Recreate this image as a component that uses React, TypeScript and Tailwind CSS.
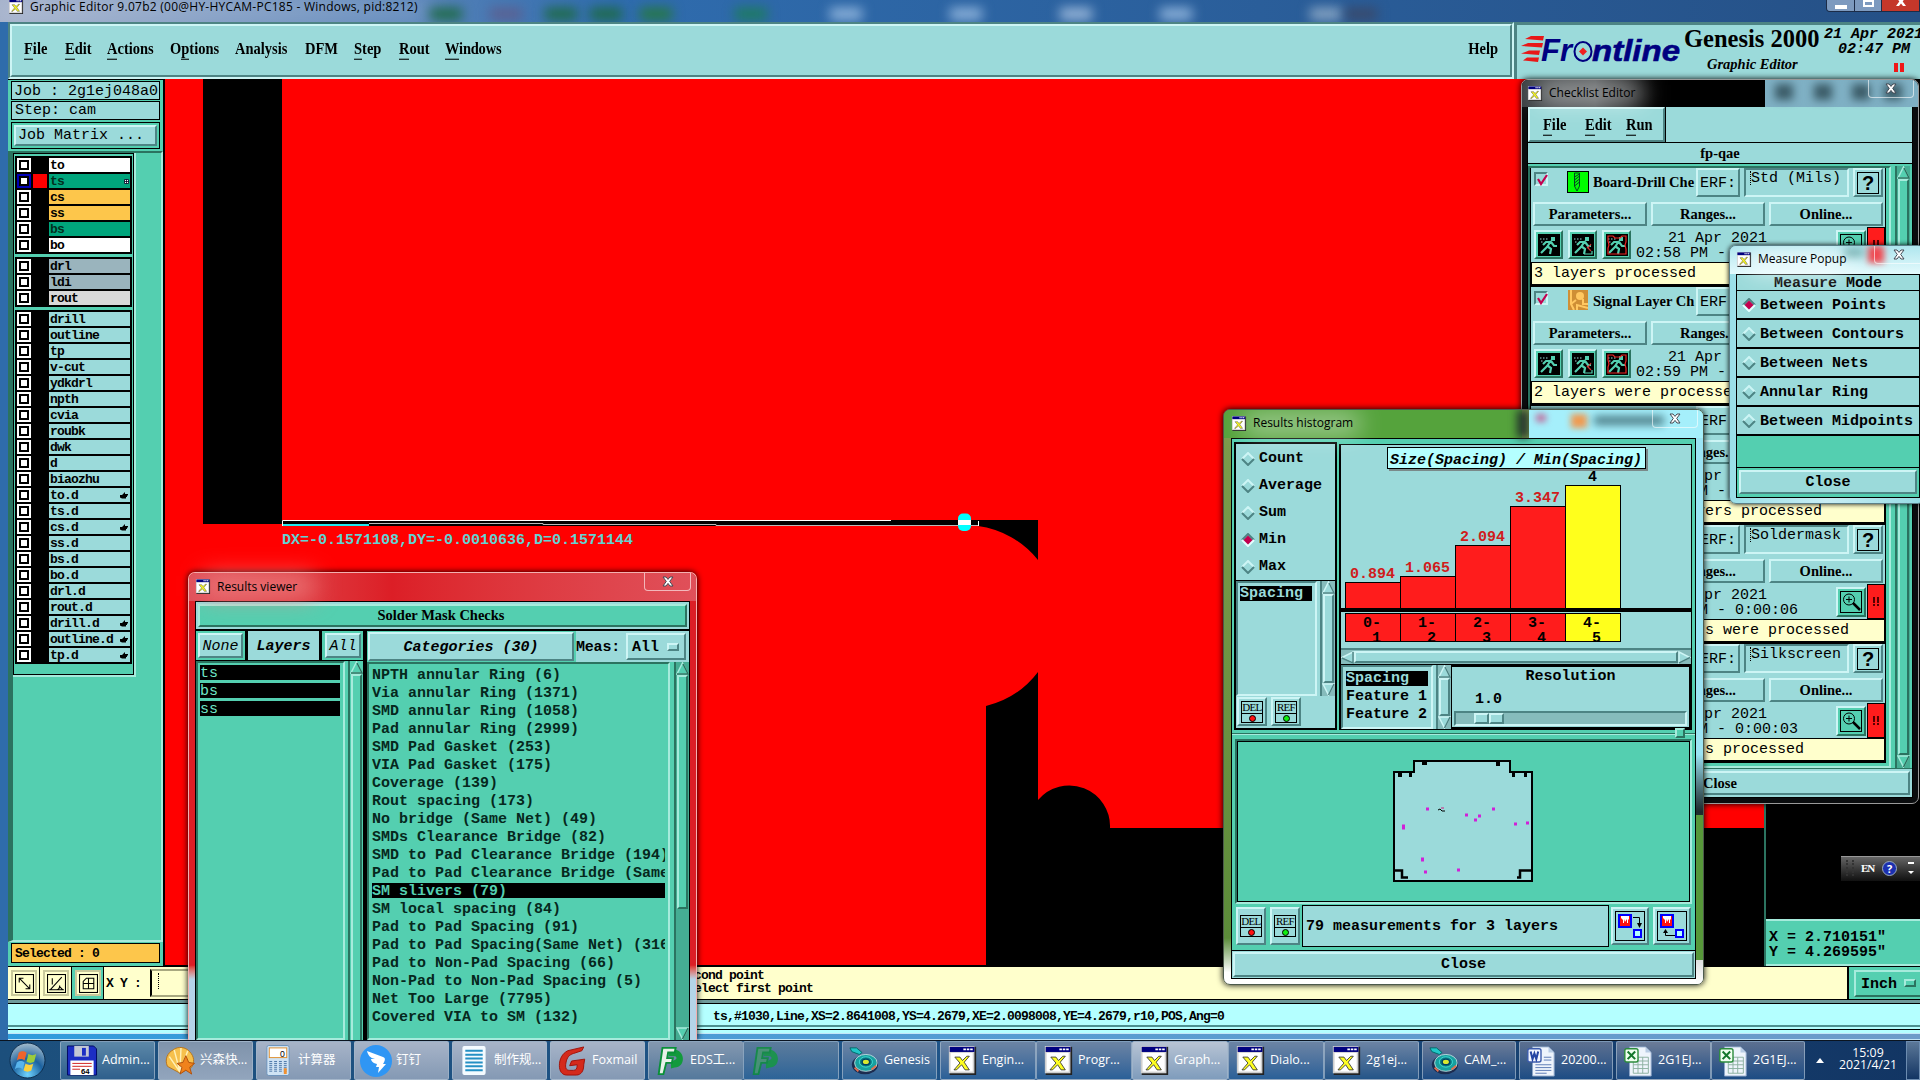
import type { ReactNode } from 'react'
import clsx from 'clsx'

const RAISED = 'bg-[#9bdada] border-2 border-t-[#cdf5f5] border-l-[#cdf5f5] border-b-[#4d8484] border-r-[#4d8484]'
const SUNKEN = 'bg-[#9bdada] border-2 border-t-[#4d8484] border-l-[#4d8484] border-b-[#cdf5f5] border-r-[#cdf5f5]'
const GREEN_UP = 'bg-[#54cfb0] border-2 border-t-[#a6ebdc] border-l-[#a6ebdc] border-b-[#2b7360] border-r-[#2b7360]'
const GREEN_DOWN = 'bg-[#54cfb0] border-2 border-t-[#2b7360] border-l-[#2b7360] border-b-[#a6ebdc] border-r-[#a6ebdc]'
const MONO = "font-['Liberation_Mono',monospace] text-[15px] leading-none whitespace-pre"
// same face, nudged down a pixel when centred in a fixed-height box
const MONO_LOW = "font-['Liberation_Mono',monospace] text-[15px] leading-none whitespace-pre pt-[2px]"
const SMALL = "font-['Liberation_Mono',monospace] text-[13px] tracking-[-0.8px] font-bold leading-none whitespace-pre"
const SERIF = "font-['Liberation_Serif',serif] font-bold text-[14.5px] leading-none whitespace-pre"
const UI = "font-['Open_Sans','Noto_Sans_CJK_SC',sans-serif] leading-none whitespace-pre"

interface Layer {
  name: string
  color?: string
  hand?: boolean
}

const BOARD_LAYERS: Layer[] = [
  { name: 'to', color: 'bg-white' },
  { name: 'ts', color: 'bg-[#00a57c]' },
  { name: 'cs', color: 'bg-[#fdc64b]' },
  { name: 'ss', color: 'bg-[#fdc64b]' },
  { name: 'bs', color: 'bg-[#00a57c]' },
  { name: 'bo', color: 'bg-white' },
]

const DRILL_LAYERS: Layer[] = [
  { name: 'drl', color: 'bg-[#9ab4bd]' },
  { name: 'ldi', color: 'bg-[#9ab4bd]' },
  { name: 'rout', color: 'bg-[#d9d9d9]' },
]

const MISC_LAYERS: Layer[] = [
  ...['drill', 'outline', 'tp', 'v-cut', 'ydkdrl', 'npth', 'cvia', 'roubk', 'dwk', 'd', 'biaozhu'].map(name => ({ name })),
  { name: 'to.d', hand: true },
  { name: 'ts.d' },
  { name: 'cs.d', hand: true },
  { name: 'ss.d' },
  { name: 'bs.d' },
  { name: 'bo.d' },
  { name: 'drl.d' },
  { name: 'rout.d' },
  { name: 'drill.d', hand: true },
  { name: 'outline.d', hand: true },
  { name: 'tp.d', hand: true },
]

const CATEGORIES = [
  'NPTH annular Ring (6)',
  'Via annular Ring (1371)',
  'SMD annular Ring (1058)',
  'Pad annular Ring (2999)',
  'SMD Pad Gasket (253)',
  'VIA Pad Gasket (175)',
  'Coverage (139)',
  'Rout spacing (173)',
  'No bridge (Same Net) (49)',
  'SMDs Clearance Bridge (82)',
  'SMD to Pad Clearance Bridge (194)',
  'Pad to Pad Clearance Bridge (Same',
  'SM slivers (79)',
  'SM local spacing (84)',
  'Pad to Pad Spacing (91)',
  'Pad to Pad Spacing(Same Net) (316',
  'Pad to Non-Pad Spacing (66)',
  'Non-Pad to Non-Pad Spacing (5)',
  'Net Too Large (7795)',
  'Covered VIA to SM (132)',
]

const BARS = [
  { value: '0.894', h: 26, from: '0-', to: '1' },
  { value: '1.065', h: 32, from: '1-', to: '2' },
  { value: '2.094', h: 63, from: '2-', to: '3' },
  { value: '3.347', h: 102, from: '3-', to: '4' },
  { value: '4', h: 123, from: '4-', to: '5', max: true },
]

const CHECKS = [
  { title: 'Board-Drill Che', erf: 'Std (Mils)', time: '02:58 PM - 0:00:03', msg: '3 layers processed', icon: 'drill' },
  { title: 'Signal Layer Ch', erf: 'Outer', time: '02:59 PM - 0:00:12', msg: '2 layers were processed', icon: 'signal' },
  { title: 'Power/Ground C', erf: 'Inner', time: '02:59 PM - 0:00:02', msg: '12 power/ground layers processed', icon: 'power' },
  { title: 'Solder Mask Ch', erf: 'Soldermask', time: '03:00 PM - 0:00:06', msg: '3 solder mask layers were processed', icon: 'signal' },
  { title: 'Silk Screen Ch', erf: 'Silkscreen', time: '03:01 PM - 0:00:03', msg: '2 silk screen layers processed', icon: 'power' },
]

/* ---------- icons ---------- */

function XIcon({ className }: { className?: string }) {
  return (
    <svg viewBox="0 0 32 34" className={clsx('shrink-0', className)}>
      <rect x="1" y="1" width="31" height="33" fill="#222" />
      <rect width="30" height="32" fill="#cfcfcf" />
      <rect x="2" y="8" width="26" height="22" fill="#fff" />
      <rect x="1" y="1" width="29" height="6" fill="#000080" />
      <path d="M17 3h3v2h-3zM21 3h3v2h-3zM25 3h3v2h-3z" fill="#fff" />
      <path d="M7 13h6l3 4 5-5h3l-6 7 6 9h-5l-4-6-6 6H6l7-8z" fill="#ffff20" stroke="#333" strokeWidth="1" />
    </svg>
  )
}

function Arrow({ dir, green }: { dir: 'up' | 'down' | 'left' | 'right'; green?: boolean }) {
  const pts = { up: '6.5,1 12,12 1,12', down: '1,1 12,1 6.5,12', left: '1,6.5 12,1 12,12', right: '1,1 12,6.5 1,12' }[dir]
  return (
    <svg viewBox="0 0 13 13" className="w-[13px] h-[13px] shrink-0">
      <polygon points={pts} fill={green ? '#54cfb0' : '#9bdada'} stroke={green ? '#a6ebdc' : '#cdf5f5'} strokeWidth="1.5" />
      <path d={dir === 'up' ? 'M1 12H12L7 2' : dir === 'down' ? 'M12 1L6.5 12' : dir === 'left' ? 'M12 1V12L1 7' : 'M12 6.5L1 12'} fill="none" stroke={green ? '#2b7360' : '#4d8484'} strokeWidth="1.5" />
    </svg>
  )
}

function Radio({ on }: { on?: boolean }) {
  return (
    <svg viewBox="0 0 14 14" className="w-[14px] h-[14px] shrink-0">
      <path d="M1 7L7 1L13 7" fill="none" stroke={on ? '#4d8484' : '#cdf5f5'} strokeWidth="2" />
      <path d="M1 7L7 13L13 7" fill="none" stroke={on ? '#e4ffff' : '#4d8484'} strokeWidth="2" />
      {on && <path d="M7 2.5L11.5 7L7 11.5L2.5 7Z" fill="#c4004f" />}
    </svg>
  )
}

function Hand() {
  return (
    <svg viewBox="0 0 8 8" className="w-2 h-2 mr-0.5">
      <path d="M0 4h2L5 1v2h3v1.500H7V6H6v1.500H2L0 6.500z" fill="#000" />
    </svg>
  )
}

function Runner({ kind }: { kind: number }) {
  return (
    <div className="w-[29px] h-[29px] bg-[#54cfb0] border-2 border-t-[#cdf5f5] border-l-[#cdf5f5] border-b-[#2b7360] border-r-[#2b7360] flex items-center justify-center">
      <svg viewBox="0 0 22 22" className="w-[22px] h-[22px] bg-black">
        <path d="M13 3h4v4h-4z" fill="#54cfb0" />
        <path d="M13 7l-4 6M12 8L8 8l-3 3M13 8l3 4h3M9 12l4 3-1 5M9 13l-3 3-3 3" fill="none" stroke="#54cfb0" strokeWidth="2.200" />
        <path d="M2 5h1.500M5 5h1.500M8 5h1.500M3 8h1.500" stroke="#9bdada" strokeWidth="1.2" />
        {kind === 1 && <path d="M19 10l-3 4M15 13l4 4" stroke="#c33" strokeWidth="1.2" fill="none" />}
        {kind === 1 && <path d="M12 20h8v-3" stroke="#54cfb0" strokeWidth="1.2" fill="none" />}
        {kind === 2 && <path d="M2 2h5l2 2h5l2-2h4v6l-1 3 1 4v5H2v-6l1-3-1-4z" stroke="#e22" strokeWidth="1.2" fill="none" />}
      </svg>
    </div>
  )
}

function CheckIcon({ kind }: { kind: string }) {
  if (kind === 'drill')
    return (
      <svg viewBox="0 0 22 22" className="w-[22px] h-[22px] shrink-0">
        <rect x=".5" y=".5" width="21" height="21" fill="#0f0" stroke="#000" />
        <path d="M7.500 2h5v13l-2.500 5-2.500-5zM7.500 6l5-3M7.500 9l5-4M7.500 12l5-4M7.500 15l5-4" fill="none" stroke="#042" strokeWidth="1" />
      </svg>
    )
  if (kind === 'signal')
    return (
      <svg viewBox="0 0 20 20" className="w-[20px] h-[20px] mx-px shrink-0">
        <rect width="20" height="20" fill="#cf8f35" />
        <circle cx="12" cy="6" r="4" fill="#ffc861" />
        <path d="M3 0v14l3 6M8 10l-5 4M15 9v5h5M9 20v-5l11 3" stroke="#ffc861" strokeWidth="2" fill="none" />
      </svg>
    )
  return (
    <svg viewBox="0 0 20 20" className="w-[20px] h-[20px] mx-px shrink-0">
      <circle cx="10" cy="10" r="9" fill="#f09040" />
      <circle cx="10" cy="10" r="4" fill="none" stroke="#fde" strokeWidth="2" />
    </svg>
  )
}

function DotButton({ label, dot, tall }: { label: string; dot: string; tall?: boolean }) {
  return (
    <div className={clsx(RAISED, 'w-[30px] flex items-center justify-center shrink-0', tall ? 'h-[38px]' : 'h-[29px]')}>
      <div className="w-[22px] h-[22px] border border-black flex flex-col items-center shrink-0">
        <span className="font-['Liberation_Serif',serif] text-[11px] leading-[11px] tracking-[-0.7px] border-b border-black text-black w-full flex justify-center">{label}</span>
        <span className={clsx('w-[7px] h-[7px] rounded-full border border-black mt-px', dot)} />
      </div>
    </div>
  )
}

function SwapButton({ back }: { back?: boolean }) {
  return (
    <div className={clsx(RAISED, 'w-[38px] h-[38px] flex items-center justify-center shrink-0')}>
      <svg viewBox="0 0 30 30" className="w-[30px] h-[30px]">
        <rect x=".5" y=".5" width="29" height="29" fill="none" stroke="#000" />
        <rect x="4" y="4" width="12" height="12" fill="#f11" stroke="#00f" strokeWidth="2" />
        <path d="M6 5h8v3l-1 1v3h-1V8l-2 3-1-3v4H8V9L6 7z" fill="#fff" />
        <rect x="19" y="19" width="7" height="7" fill="#b4ffff" stroke="#00f" strokeWidth="2" />
        {back ? (
          <>
            <path d="M18 24.500H8.500V19" fill="none" stroke="#000" />
            <path d="M6 22l2.500-4 2.500 4z" fill="#000" />
          </>
        ) : (
          <>
            <path d="M18 6.500h6.500v6" fill="none" stroke="#000" />
            <path d="M22 12l2.500 5 2.500-5z" fill="#000" />
          </>
        )}
      </svg>
    </div>
  )
}

/* ---------- shared pieces ---------- */

function CloseGlyph({ className }: { className?: string }) {
  return (
    <div className={clsx('absolute top-0 h-[18px] border border-t-0 border-white/60 rounded-b-[4px] flex items-center justify-center', className)}>
      <svg viewBox="0 0 12 11" className="w-3 h-[11px]">
        <path d="M1 1h3l2 2.4L8 1h3L7.7 5.4 11 10H8L6 7.4 4 10H1l3.3-4.6z" fill="#fff" stroke="#444a55" strokeWidth="1" />
      </svg>
    </div>
  )
}

function TitleText({ text, className }: { text: string; className?: string }) {
  return (
    <div className="relative z-10 flex items-center gap-[6px]">
      <XIcon className="w-[16px] h-[15px]" />
      <span className={clsx(UI, 'text-[12px] text-black', className)}>{text}</span>
    </div>
  )
}

function VScroll({ green, thumb }: { green?: boolean; thumb?: string }) {
  return (
    <div className={clsx('w-[15px] flex flex-col items-center border-l-2 shrink-0', green ? 'bg-[#45ad93] border-[#2b7360]' : 'bg-[#86bcbc] border-[#4d8484]')}>
      <Arrow dir="up" green={green} />
      <div className={clsx('w-[11px]', green ? GREEN_UP : RAISED, thumb ?? 'flex-1')} />
      {thumb && <div className="flex-1" />}
      <Arrow dir="down" green={green} />
    </div>
  )
}

function MenuItem({ text, mark = 0, className }: { text: string; mark?: number; className?: string }) {
  return (
    <span className={clsx(SERIF, 'inline-block scale-y-[1.08]', className)}>
      {mark < 0 ? text : (
        <>
          {text.slice(0, mark)}
          <span className="border-b border-black pb-px">{text[mark]}</span>
          {text.slice(mark + 1)}
        </>
      )}
    </span>
  )
}

/* ---------- main window ---------- */

function LayerGroup({ layers }: { layers: Layer[] }) {
  return (
    <div className="bg-black pl-0.5 pr-0.5 pt-[2px] flex flex-col">
      {layers.map(l => {
        const active = l.name === 'ts'
        return (
          <div key={l.name} className="h-4 flex items-start">
            <div className={clsx('w-[14px] h-[14px] p-[2px]', active ? 'bg-[#0000b8]' : 'bg-white')}>
              <div className="w-[10px] h-[10px] border-2 border-black bg-white" />
            </div>
            <div className={clsx('w-[14px] h-[14px] ml-[2px] mr-[2px]', active ? 'bg-[#ff0000]' : 'bg-black')} />
            <div className={clsx('flex-1 h-[14px] flex items-center justify-between pl-px', l.color ?? 'bg-[#9bdada]')}>
              <span className={clsx(SMALL, active || l.name === 'bs' ? 'text-[#02301f]' : 'text-black')}>{l.name}</span>
              {l.hand && <Hand />}
              {active && (
                <svg viewBox="0 0 5 5" className="w-[5px] h-[5px] mr-px">
                  <path d="M.5.5h4v4h-4zM2.5.5v4M.5 2.5h4" stroke="#002" strokeWidth=".8" fill="#fff" />
                </svg>
              )}
            </div>
          </div>
        )
      })}
    </div>
  )
}

function FrontlineLogo() {
  return (
    <svg viewBox="0 0 160 32" className="w-[160px] h-8 shrink-0">
      <path d="M10 3h13l-1 4.500-18-1.500zM7 10h15l-1 4.500-21-1.500zM8 17.500h11l-1 4.500-18-1.500zM6 24.500h12l-1 4.500-15-1.500z" fill="#e81818" />
      <text x="20" y="28" textLength="31" lengthAdjust="spacingAndGlyphs" fill="#000080" fontFamily="Liberation Sans" fontWeight="bold" fontStyle="italic" fontSize="31">Fr</text>
      <ellipse cx="62" cy="18.500" rx="8.500" ry="9.500" fill="none" stroke="#000080" strokeWidth="2" />
      <path d="M62 14.500l4 4-4 4-4-4z" fill="#f02020" />
      <text x="71" y="28" textLength="88" lengthAdjust="spacingAndGlyphs" fill="#000080" stroke="#000080" strokeWidth=".6" fontFamily="Liberation Sans" fontWeight="bold" fontStyle="italic" fontSize="30">ntline</text>
    </svg>
  )
}

function Canvas() {
  return (
    <div className="relative w-[1599px] shrink-0 bg-black">
      <svg viewBox="165 79 1599 887" className="block w-[1599px] h-[887px]">
        <rect x="165" y="79" width="1599" height="749" fill="#ff0000" />
        <rect x="165" y="800" width="821" height="165" fill="#ff0000" />
        <rect x="203" y="79" width="79" height="445" fill="#000" />
        <path d="M282 520H1038V560A92.6 92.6 0 0 0 978 526H282Z" fill="#000" />
        <path d="M1038 672A92.6 92.6 0 0 1 986 706V967H1764V828H1110A40.8 40.8 0 0 0 1038 800Z" fill="#000" />
        <path d="M282.5 526V520.5H891" fill="none" stroke="#fff" />
        <path d="M283 525H369" stroke="#20e8f0" strokeWidth="2" />
        <path d="M369 523.5H543V524.500H716V525.500H978" fill="none" stroke="#b9b9b9" />
        <path d="M978.500 521V526" stroke="#fff" />
        <rect x="958" y="513.500" width="13" height="17.500" rx="5" fill="#00ffff" />
        <rect x="958" y="520" width="13" height="5" fill="#fff" />
      </svg>
      <span className={clsx(MONO, 'absolute left-[117px] top-[454px] text-[#62d3d3] font-bold')}>DX=-0.1571108,DY=-0.0010636,D=0.1571144</span>
    </div>
  )
}

function ToolCell({ children, on }: { children: ReactNode; on?: boolean }) {
  return (
    <div className={clsx('w-[32px] h-[32px] border-r border-black p-[3px] shrink-0', on ? 'bg-[#54cfb0]' : 'bg-[#ffffcc]')}>
      <div className="w-[26px] h-[26px] bg-[#ffffcc] border-2 border-[#c9c99c] flex items-center justify-center">
        <svg viewBox="0 0 18 18" className="w-[19px] h-[19px]" fill="none" stroke="#000">
          <rect x=".5" y=".5" width="17" height="17" />
          {children}
        </svg>
      </div>
    </div>
  )
}

function MainWindow() {
  return (
    <div className="w-[1920px] h-[1040px] bg-[#2f6cab] flex flex-col pl-[8px]">
      <div className="h-[22px] shrink-0 -ml-2 pl-2 relative overflow-hidden bg-gradient-to-r from-[#a3b0ca] via-[#2f6cae] via-32% to-[#255086]">
        <div className="absolute inset-y-0 left-0 w-[430px] bg-white/20 blur-md" />
        {['left-[430px] bg-[#1d6a44]', 'left-[490px] bg-[#5b5f90]', 'left-[545px] bg-[#1d6a44]', 'left-[590px] bg-[#1d6a44]', 'left-[640px] bg-[#257840]', 'left-[735px] bg-[#1c7c5c]', 'left-[830px] bg-[#8fb4dc]', 'left-[950px] bg-[#8fb4dc]', 'left-[1060px] bg-[#9ab8da]', 'left-[1160px] bg-[#8fb4dc]', 'left-[1310px] bg-[#8aa7c5]', 'left-[1345px] bg-[#39496a]'].map(c => (
          <div key={c} className={clsx('absolute top-[8px] w-8 h-3 blur-[6px]', c)} />
        ))}
        <div className="relative -mt-px">
          <TitleText text="Graphic Editor 9.07b2 (00@HY-HYCAM-PC185 - Windows, pid:8212)" className="text-[12.5px] tracking-[0.26px]" />
        </div>
        <div className="absolute right-0 top-0 h-[12px] w-[94px] flex border border-t-0 border-[#1c2c48] rounded-bl-[4px] overflow-hidden">
          <div className="w-[28px] border-r border-[#1c2c48] bg-[#7d9abf] flex items-center justify-center"><span className="w-3 h-1 mt-0.5 bg-white" /></div>
          <div className="w-[27px] border-r border-[#1c2c48] bg-[#7d9abf] flex items-start justify-center"><span className="w-[11px] h-[7px] border-2 border-white" /></div>
          <div className="flex-1 bg-[#c4372a] flex justify-center">
            <svg viewBox="0 4 12 7" className="w-3 h-[7px]"><path d="M1 1h3l2 2.4L8 1h3L7.7 5.4 11 10H8L6 7.400 4 10H1l3.3-4.600z" fill="#fff" /></svg>
          </div>
        </div>
      </div>

      {/* Menu bar */}
      <div className="h-[57px] shrink-0 flex bg-[#9bdada]">
        <div className="w-[1506px] border-2 border-[#cdf5f5] border-t-[#4d8484] border-l-[#4d8484] flex">
          <div className="flex-1 border-2 border-t-[#cdf5f5] border-l-[#cdf5f5] border-b-[#4d8484] border-r-[#4d8484] flex items-center">
            <div className="flex items-center pl-[12px] pb-[2px] w-full">
              <MenuItem text="File" className="w-[41px]" />
              <MenuItem text="Edit" className="w-[42px]" />
              <MenuItem text="Actions" className="w-[63px]" />
              <MenuItem text="Options" mark={1} className="w-[65px]" />
              <MenuItem text="Analysis" mark={-1} className="w-[70px]" />
              <MenuItem text="DFM" mark={-1} className="w-[49px]" />
              <MenuItem text="Step" className="w-[45px]" />
              <MenuItem text="Rout" className="w-[46px]" />
              <MenuItem text="Windows" className="tracking-[-0.2px]" />
              <MenuItem text="Help" mark={-1} className="ml-auto mr-[12px]" />
            </div>
          </div>
        </div>
        <div className="w-[406px] border-t-[3px] border-l-[3px] border-[#4d8484] flex overflow-hidden">
          <div className="pt-[8px] pl-1"><FrontlineLogo /></div>
          <div className="w-[143px] pl-[3px] flex flex-col shrink-0">
            <span className="font-['Liberation_Serif',serif] font-bold text-[24.500px] leading-[28px] whitespace-pre">Genesis 2000</span>
            <span className="font-['Liberation_Serif',serif] font-bold italic text-[14.500px] leading-[22px] pl-[23px] whitespace-pre">Graphic Editor</span>
          </div>
          <div className="pt-px flex flex-col shrink-0 w-[120px]">
            <span className={clsx(MONO, 'font-bold italic leading-[15px] pt-px')}>21 Apr 2021</span>
            <span className={clsx(MONO, 'font-bold italic leading-[15px] pl-[14px]')}>02:47 PM</span>
            <div className="flex gap-[2px] pl-[70px] pt-[6px]">
              <span className="w-1 h-[9px] bg-[#f01818]" />
              <span className="w-1 h-[9px] bg-[#f01818]" />
            </div>
          </div>
        </div>
      </div>

      {/* Work area */}
      <div className="h-[887px] shrink-0 flex">
        <div className="w-[157px] shrink-0 bg-[#54cfb0] border-t border-r-2 border-black flex flex-col">
          <div className="px-[3px] pt-px">
            <div className={clsx(MONO_LOW, 'border border-black bg-[#9bdada] h-[19px] flex items-center pl-0.5')}>Job : 2g1ej048a0</div>
            <div className={clsx(MONO, 'border border-black bg-[#9bdada] h-[19px] mt-px flex items-center pl-[3px]')}>Step: cam</div>
            <div className="border border-black h-[27px] mt-[2px] p-[2px]">
              <div className={clsx(RAISED, MONO, 'h-[21px] flex items-center pl-[2px]')}>Job Matrix ...</div>
            </div>
          </div>
          <div className="flex-1 mt-[2px] border-l-[5px] border-t-2 border-r-2 border-b-2 border-l-[#2b7360] border-t-[#2b7360] border-r-[#a6ebdc] border-b-[#a6ebdc]">
            <div className="w-[123px] border-r-2 border-b-2 border-[#a6ebdc]">
              <div className="border border-black px-px pt-[2px] pb-[10px] flex flex-col gap-[3px]">
                <LayerGroup layers={BOARD_LAYERS} />
                <LayerGroup layers={DRILL_LAYERS} />
                <LayerGroup layers={MISC_LAYERS} />
              </div>
            </div>
          </div>
          <div className={clsx(SMALL, 'mx-[3px] mt-px mb-[3px] h-[20px] border border-black bg-[#fdc64b] flex items-center pl-[3px]')}>Selected : 0</div>
        </div>
        <Canvas />
        <div className="w-[156px] bg-black border-l-2 border-[#2b7360] flex flex-col justify-end">
          <div className="h-[47px] border-y-2 border-t-[#a6ebdc] border-b-[#a6ebdc] bg-[#54cfb0] pl-[3px] pt-[9px]">
            <div className={clsx(MONO, 'leading-[15px] font-bold')}>X = 2.710151"</div>
            <div className={clsx(MONO, 'leading-[15px] font-bold')}>Y = 4.269595"</div>
          </div>
        </div>
      </div>

      {/* Message line */}
      <div className="h-[34px] shrink-0 border-y border-black bg-[#ffffcc] flex">
        <ToolCell><path d="M4 4l10 10M4 8V4h4M14 10v4h-4" /></ToolCell>
        <ToolCell><path d="M2 15h14M3 15L14 3M5 4v6M9 15c3 0 3-4 3-4M12 12l3 3" /></ToolCell>
        <ToolCell on><path d="M4 14V7l3-3h7v10zM4 9h10M9 4v10" /></ToolCell>
        <span className={clsx(SMALL, 'w-[46px] self-center pl-[2px] shrink-0')}>X Y :</span>
        <div className="w-[60px] my-0.5 border-2 border-[#a8a880] border-l-black shrink-0 flex"><span className="ml-[6px] mt-0.5 h-[16px] border-l border-dotted border-black" /></div>
        <div className={clsx(SMALL, 'pl-[484px] pt-[2px] leading-[13px] w-[1640px] shrink-0')}>
          cond point{'\n'}elect first point
        </div>
      </div>
      <div className="relative">
        <div className="absolute right-0 top-[-33px] w-[73px] h-[32px] bg-[#54cfb0] border-l-2 border-black flex items-center pl-[5px]">
          <div className={clsx(GREEN_UP, 'border-r-0 h-[27px] w-full flex items-center pl-[5px] gap-[7px]')}>
            <span className={clsx(MONO_LOW, 'font-bold')}>Inch</span>
            <span className={clsx(GREEN_UP, 'w-[12px] h-[8px]')} />
          </div>
        </div>
      </div>
      <div className="h-[33px] shrink-0 bg-[#b4ffff] border-t-[3px] border-[#6f9a9a]">
        <div className="h-[27px] border-y border-black mr-0 pt-[3px] pb-[2px]">
          <div className="h-full border-b-2 border-[#4d9090] flex items-center">
            <span className={clsx(SMALL, 'pl-[705px]')}>ts,#1030,Line,XS=2.8641008,YS=4.2679,XE=2.0098008,YE=4.2679,r10,POS,Ang=0</span>
          </div>
        </div>
      </div>
      <div className="flex-1 bg-gradient-to-r from-[#2f9bdc] to-[#6d9cc9] border-t border-b border-[#c4e6f8]" />
    </div>
  )
}

/* ---------- results viewer ---------- */

function ResultsViewer() {
  return (
    <div className="absolute left-[188px] top-[572px] w-[509px] h-[468px] rounded-t-[7px] border border-b-0 border-[#f4b0b0] bg-gradient-to-b from-[#dc1e26] from-84% to-[#b4d4e8] to-87% shadow-[0_0_6px_#000] px-[6px] flex flex-col">
      <div className="absolute left-0 top-0 w-full h-[28px] rounded-t-[6px] bg-gradient-to-r from-[#e0505a] via-[#dc1e26] via-40% to-[#e0505a]" />
      <div className="absolute left-[15px] top-[2px] w-[110px] h-[22px] bg-[#f08a8a]/80 blur-md" />
      <div className="h-[28px] flex items-center pb-px shrink-0 relative">
        <TitleText text="Results viewer" />
        <CloseGlyph className="-right-[1px] w-[47px]" />
      </div>
      <div className="flex-1 border border-b-0 border-black bg-black flex flex-col overflow-hidden">
        <div className="h-[27px] bg-[#9bdada] p-[2px] shrink-0">
          <div className={clsx(GREEN_UP, SERIF, 'h-[23px] flex items-center justify-center pr-[3px]')}>Solder Mask Checks</div>
        </div>
        <div className="flex-1 flex gap-[4px] pt-[2px] min-h-0">
          <div className="w-[167px] flex flex-col gap-px">
            <div className="h-[29px] flex gap-[3px] bg-black">
              <div className="bg-[#54cfb0] p-[2px]"><div className={clsx(RAISED, MONO_LOW, 'w-[45px] h-[25px] flex items-center justify-center italic')}>None</div></div>
              <div className={clsx(MONO_LOW, 'flex-1 bg-[#9bdada] flex items-center justify-center italic font-bold')}>Layers</div>
              <div className="bg-[#54cfb0] p-[2px] pl-[3px]"><div className={clsx(RAISED, MONO_LOW, 'w-[36px] h-[25px] flex items-center justify-center italic')}>All</div></div>
            </div>
            <div className="flex-1 flex bg-[#54cfb0] overflow-hidden">
              <div className={clsx(GREEN_DOWN, 'flex-1 mr-[3px] pl-[2px] pr-[3px] pt-[2px]')}>
                {['ts', 'bs', 'ss'].map(n => (
                  <div key={n} className={clsx(MONO_LOW, 'h-[15px] mb-[3px] bg-black text-[#6fe6c8] flex items-center')}>{n}</div>
                ))}
              </div>
              <div className="w-[15px] border-l-2 border-[#2b7360] flex flex-col items-center">
                <Arrow dir="up" green />
                <div className={clsx(GREEN_UP, 'w-[11px] flex-1 border-b-0')} />
              </div>
            </div>
          </div>
          <div className="flex-1 min-w-0 flex flex-col bg-[#54cfb0]">
            <div className="h-[31px] flex bg-[#9bdada]">
              <div className="bg-[#54cfb0] p-px pr-[2px]"><div className={clsx(RAISED, MONO_LOW, 'w-[206px] h-[29px] flex items-center justify-center italic font-bold')}>Categories (30)</div></div>
              <span className={clsx(MONO_LOW, 'self-center w-[50px] font-bold tracking-[-0.200px]')}>Meas:</span>
              <div className={clsx(RAISED, 'w-[60px] h-[27px] mt-[2px] flex items-center justify-between pl-[4px] pr-[5px]')}>
                <span className={clsx(MONO_LOW, 'font-bold')}>All</span>
                <span className={clsx(RAISED, 'w-[12px] h-[8px]')} />
              </div>
            </div>
            <div className="flex-1 flex min-h-0 gap-[4px]">
              <div className={clsx(GREEN_DOWN, 'w-[303px] pl-[3px] pr-[3px] pt-[3px]')}>
                {CATEGORIES.map(c => (
                  <div key={c} className="h-[18px]">
                    <div className={clsx(MONO_LOW, 'h-[15px] flex items-center overflow-hidden font-bold', c.startsWith('SM sl') ? 'bg-black text-[#54cfb0]' : 'text-[#06281d]')}>{c}</div>
                  </div>
                ))}
              </div>
              <VScroll green thumb="h-[234px]" />
            </div>
          </div>
        </div>
      </div>
    </div>
  )
}

/* ---------- checklist editor ---------- */

function CheckRow({ c }: { c: (typeof CHECKS)[number] }) {
  return (
    <div className="h-[119px] bg-[#9bdada] border-b-[3px] border-black flex flex-col shrink-0">
      <div className="h-[34px] flex items-start pl-[3px]">
        <div className={clsx(SUNKEN, 'w-[14px] h-[14px] mt-[4px] mr-[19px] border shrink-0')}>
          <svg viewBox="0 0 12 12" className="w-3 h-3"><path d="M2 5l3 5 6-9" stroke="#c4004f" strokeWidth="2.200" fill="none" /></svg>
        </div>
        <div className="mt-[3px] shrink-0"><CheckIcon kind={c.icon} /></div>
        <span className={clsx(SERIF, 'ml-[4px] mt-[7px] w-[102px] h-[18px] overflow-hidden shrink-0')}>{c.title}</span>
        <div className={clsx(RAISED, MONO_LOW, 'w-[44px] h-[29px] ml-px flex items-center justify-center shrink-0')}>ERF:</div>
        <div className={clsx(SUNKEN, MONO, 'w-[105px] h-[29px] ml-[4px] pl-[4px] pt-px flex shrink-0')}>
          <span className="h-[14px] border-l border-dotted border-black" />{c.erf}
        </div>
        <div className={clsx(RAISED, 'w-[30px] h-[29px] ml-[4px] flex items-center justify-center shrink-0')}>
          <div className="w-[22px] h-[22px] border border-black flex items-center justify-center leading-none font-bold text-[20px] font-['Liberation_Sans',sans-serif]">?</div>
        </div>
      </div>
      <div className="h-[24px] flex gap-[4px] pl-[2px] shrink-0">
        {['Parameters...', 'Ranges...', 'Online...'].map(b => (
          <div key={b} className={clsx(RAISED, SERIF, 'w-[114px] flex items-center justify-center')}>{b}</div>
        ))}
      </div>
      <div className="h-[36px] flex pl-[3px] pt-px items-center shrink-0">
        <div className="flex gap-[5px]">
          <Runner kind={0} /><Runner kind={1} /><Runner kind={2} />
        </div>
        <div className={clsx(MONO_LOW, 'w-[205px] pl-[5px] leading-[15px] shrink-0')}>
          <div className="pl-[32px]">21 Apr 2021</div>
          <div>{c.time}</div>
        </div>
        <div className="w-[30px] h-[30px] bg-[#54cfb0] border-2 border-t-[#cdf5f5] border-l-[#cdf5f5] border-b-[#2b7360] border-r-[#2b7360] flex items-center justify-center shrink-0">
          <svg viewBox="0 0 22 22" className="w-[22px] h-[22px]" fill="none" stroke="#000">
            <rect x=".5" y=".5" width="21" height="21" />
            <circle cx="9" cy="8.500" r="5.500" />
            <path d="M6 8.500h6M9 5.500v6" />
            <path d="M13 12l7 7" strokeWidth="2.500" />
          </svg>
        </div>
        <div className="flex-1 h-[35px] ml-px bg-[#ff1c1c] border border-black flex items-center justify-center gap-[2px]">
          {[0, 1].map(i => (
            <span key={i} className="flex flex-col gap-px"><i className="w-[2px] h-[6px] bg-[#500]" /><i className="w-[2px] h-[2px] bg-[#500]" /></span>
          ))}
        </div>
      </div>
      <div className={clsx(MONO, 'flex-1 bg-[#ffffcc] border-t border-x border-black flex items-start pt-[3px] pl-[2px]')}>{c.msg}</div>
    </div>
  )
}

function ChecklistEditor() {
  return (
    <div className="absolute left-[1521px] top-[79px] w-[398px] h-[725px] rounded-[7px] border border-[#9a9a9a] bg-[#0a0c0e] px-[5px] pb-[5px] flex flex-col overflow-hidden shadow-[0_0_6px_#000]">
      <div className="absolute left-0 top-0 w-[244px] h-[27px] bg-gradient-to-r from-[#3a3f42] via-[#4a4e50] via-30% to-black to-60%" />
      <div className="absolute right-0 top-0 w-[153px] h-[27px] bg-[#7fb0c4]" />
      {['left-[253px]', 'left-[292px]', 'left-[330px]', 'left-[362px]'].map(l => (
        <div key={l} className={clsx('absolute top-[4px] w-[18px] h-[16px] bg-[#3c5c68] blur-[4px]', l)} />
      ))}
      <div className="absolute left-[16px] top-[3px] w-[105px] h-[20px] bg-white/55 blur-md" />
      <div className="h-[26px] flex items-center shrink-0 relative">
        <TitleText text="Checklist Editor" />
        <CloseGlyph className="-right-[1px] w-[46px]" />
      </div>
      <div className="flex-1 bg-[#54cfb0] border border-black flex flex-col min-h-0">
        <div className="h-[36px] bg-[#9bdada] shrink-0 border-b border-black">
          <div className={clsx(RAISED, 'h-[35px] w-[137px] flex items-center pt-px pl-[13px] outline outline-1 outline-black')}>
            <MenuItem text="File" className="w-[42px]" />
            <MenuItem text="Edit" className="w-[41px]" />
            <MenuItem text="Run" />
          </div>
        </div>
        <div className={clsx(SERIF, 'h-[21px] bg-[#9bdada] shrink-0 border-b border-black flex items-center justify-center')}>fp-qae</div>
        <div className="h-[604px] shrink-0 flex pt-[2px]">
          <div className="w-[363px] border-2 border-t-[#2b7360] border-l-[#2b7360] border-r-[#a6ebdc] border-b-[#a6ebdc] flex flex-col overflow-hidden pr-[3px]">
            <div className="border-x border-black">
              {CHECKS.map(c => <CheckRow key={c.title} c={c} />)}
            </div>
          </div>
          <div className="ml-[4px] flex"><VScroll green /></div>
        </div>
        <div className="flex-1 bg-[#9bdada] p-[2px] border-t border-[#2b7360]">
          <div className={clsx(RAISED, SERIF, 'h-full flex items-center justify-center')}>Close</div>
        </div>
      </div>
    </div>
  )
}

/* ---------- measure popup ---------- */

function MeasurePopup() {
  return (
    <div className="absolute left-[1729px] top-[245px] w-[196px] h-[259px] rounded-[7px] border border-[#5b7f88] bg-gradient-to-r from-[#9adfe8] via-[#c8eef5] to-[#94dbe4] shadow-[0_0_5px_#000] pl-[6px] pr-[4px] pb-[5px] flex flex-col overflow-hidden">
      <div className="absolute left-0 top-0 w-full h-[28px] bg-gradient-to-b from-[#aee6ee] to-[#e4fafc]" />
      <div className="absolute left-[20px] top-[5px] w-[95px] h-[20px] bg-white/80 blur-md" />
      <div className="absolute left-[138px] top-0 w-[16px] h-[17px] bg-[#f04850] blur-[3px]" />
      <div className="absolute left-[114px] top-[2px] w-[20px] h-[9px] bg-[#3a7c78]/50 blur-[4px]" />
      <div className="h-[28px] flex items-center pb-[2px] shrink-0 relative">
        <TitleText text="Measure Popup" />
        <CloseGlyph className="-right-[4px] w-[50px] h-[17px]" />
      </div>
      <div className="flex-1 bg-[#54cfb0] border border-black flex flex-col justify-between">
        <div className="bg-[#9bdada]">
          <div className={clsx(MONO_LOW, 'h-[16px] flex items-center justify-center font-bold border-b border-black')}>Measure Mode</div>
          {['Between Points', 'Between Contours', 'Between Nets', 'Annular Ring', 'Between Midpoints'].map((t, i) => (
            <div key={t} className="h-[29px] border-b-2 border-black flex items-center gap-[4px] pl-[5px]">
              <Radio on={i === 0} />
              <span className={clsx(MONO_LOW, 'font-bold')}>{t}</span>
            </div>
          ))}
        </div>
        <div className="h-[30px] border-t border-black p-[2px] pt-[2px]">
          <div className={clsx(RAISED, MONO, 'h-[24px] flex items-center justify-center font-bold')}>Close</div>
        </div>
      </div>
    </div>
  )
}

/* ---------- histogram ---------- */

function BoardMap() {
  return (
    <svg viewBox="0 0 142 124" className="w-[142px] h-[124px]">
      <path d="M2 13H22V2H118V13H140V122H2Z" fill="#9bdada" stroke="#000" strokeWidth="2" />
      <path d="M6 13h4v5h-4zM17 13h3v5h-3zM30 2h5v4h-5zM104 2h4v5h-4zM120 13h3v5h-3zM132 13h3v5h-3z" fill="#000" />
      <path d="M3 111.500H10V118.500H16M139 111.500H128V118.500H125" fill="none" stroke="#000" strokeWidth="2.500" />
      <path d="M34 48.500h3v3h-3zM73 54.500h3v3h-3zM86 55.500h3v3h-3zM82 59.500h3v3h-3zM100 48.500h3v3h-3zM122 63.500h3v3h-3zM134 62.500h3v3h-3zM10 65.500h3v5h-3zM29 98.500h3v4h-3zM32 111.500h3v3h-3zM65 109.500h3v3h-3z" fill="#d020d8" />
      <path d="M46 51l2-1 2 2 3 0" stroke="#000" fill="none" />
      <path d="M49 49h3" stroke="#d02080" />
    </svg>
  )
}

function Histogram() {
  return (
    <div className="absolute left-[1223px] top-[409px] w-[481px] h-[576px] rounded-[7px] border border-[#4c5a4c] bg-gradient-to-b from-[#7d9c4c] via-[#5c8c3a] via-92% to-white to-98% shadow-[0_0_6px_#000] px-[7px] pb-[7px] flex flex-col overflow-hidden">
      <div className="absolute right-0 top-0 w-[7px] h-full bg-gradient-to-b from-[#9ce4f4] from-60% via-[#1c2a2c] via-70% to-white" />
      <div className="absolute right-0 top-[405px] w-[7px] h-[145px] bg-[#57983a]" />
      <div className="absolute left-0 top-0 w-[298px] h-[28px] bg-[#55a33c]" />
      <div className="absolute left-[293px] top-0 w-[12px] h-[28px] bg-[#24342c] blur-[4px]" />
      <div className="absolute right-0 top-0 w-[174px] h-[28px] bg-[#a5effb]" />
      <div className="absolute left-[312px] top-[4px] w-[10px] h-[8px] bg-[#c070a0] blur-[3px]" />
      <div className="absolute left-[347px] top-[4px] w-[16px] h-[14px] bg-[#f09a50] blur-[3px]" />
      <div className="absolute left-[370px] top-[6px] w-[70px] h-[9px] bg-[#4c7c86] blur-[4px]" />
      <div className="absolute left-[20px] top-[4px] w-[115px] h-[20px] bg-white/50 blur-md" />
      <div className="h-[28px] flex items-center pb-[2px] shrink-0 relative">
        <TitleText text="Results histogram" className="text-[12.3px]" />
        <CloseGlyph className="-right-[2px] w-[46px]" />
      </div>
      <div className="flex-1 bg-[#54cfb0] border border-black flex flex-col">
        <div className="h-[291px] flex pt-[3px] pl-[2px] pr-[4px]">
          {/* Left controls */}
          <div className="w-[103px] h-[288px] border-2 border-black bg-[#9bdada] flex flex-col shrink-0">
            <div className="h-[137px] border-b border-black pt-px">
              {['Count', 'Average', 'Sum', 'Min', 'Max'].map(t => (
                <div key={t} className="h-[27px] flex items-center gap-[4px] pl-[5px]">
                  <Radio on={t === 'Min'} />
                  <span className={clsx(MONO, 'font-bold')}>{t}</span>
                </div>
              ))}
            </div>
            <div className="h-[115px] flex gap-[3px]">
              <div className={clsx(SUNKEN, 'w-[81px] pl-[2px] pt-[3px] pr-[3px] shrink-0')}>
                <div className={clsx(MONO, 'h-[15px] bg-black text-[#9bdada] font-bold flex items-center')}>Spacing</div>
              </div>
              <VScroll />
            </div>
            <div className="flex gap-[4px] pl-px pt-px">
              <DotButton label="DEL" dot="bg-[#f11]" />
              <DotButton label="REF" dot="bg-[#1e1]" />
            </div>
          </div>
          {/* Chart */}
          <div className="ml-[2px] w-[353px] h-[286px] mt-[2px] border border-black border-l-2 bg-[#9bdada] flex flex-col shrink-0">
            <div className="h-[203px] flex flex-col">
              <div className="h-[24px] pt-[2px] flex justify-center">
                <div className={clsx(MONO, 'w-[259px] h-[22px] bg-[#b4ffff] border border-black shadow-[2px_2px_0_#7a8a8a] flex items-end justify-center italic font-bold')}>Size(Spacing) / Min(Spacing)</div>
              </div>
              <div className="flex-1 flex items-end pl-[4px]">
                {BARS.map(b => (
                  <div key={b.value} className="w-[55px] flex flex-col items-center">
                    <span className={clsx(MONO, 'font-bold', b.max ? 'text-black' : 'text-[#d01c1c]')}>{b.value}</span>
                    <div className={clsx('w-[56px] -mr-px border border-black border-b-0', b.max ? 'bg-[#ffff1c]' : 'bg-[#ff1c1c]')} style={{ height: b.h }} />
                  </div>
                ))}
              </div>
              <div className="h-[4px] bg-black mb-px" />
              <div className="flex pl-[4px] h-[29px]">
                {BARS.map(b => (
                  <div key={b.value} className={clsx(MONO, 'w-[56px] -mr-px border border-black font-bold pl-[17px] pt-[2px] leading-[15px] h-[29px]', b.max ? 'bg-[#ffff1c]' : 'bg-[#ff1c1c]')}>
                    {b.from}{'\n'} {b.to}
                  </div>
                ))}
              </div>
              <div className="mt-[6px]" />
            </div>
            <div className="h-[16px] flex items-center bg-[#86bcbc] border-t-2 border-[#4d8484]">
              <Arrow dir="left" />
              <div className={clsx(RAISED, 'flex-1 h-[12px]')} />
              <Arrow dir="right" />
            </div>
            <div className="flex-1 flex border-t border-black">
              <div className={clsx(SUNKEN, MONO, 'w-[92px] pl-[3px] pr-[3px] pt-[4px] font-bold')}>
                <div className="h-[15px] mb-[3px] bg-black text-[#9bdada] flex items-center">Spacing</div>
                <div className="h-[18px]">Feature 1</div>
                <div className="h-[15px]">Feature 2</div>
              </div>
              <div className="ml-[3px] flex"><VScroll /></div>
              <div className={clsx(MONO, 'flex-1 border-2 border-l border-black flex flex-col font-bold px-[2px]')}>
                <div className="text-center pt-[2px]">Resolution</div>
                <div className="pl-[21px] pt-[8px]">1.0</div>
                <div className={clsx(SUNKEN, 'bg-[#86bcbc] h-[15px] mt-auto mb-px pl-[18px]')}>
                  <div className="flex h-full">
                    <div className={clsx(RAISED, 'w-[15px]')} />
                    <div className={clsx(RAISED, 'w-[15px]')} />
                  </div>
                </div>
              </div>
            </div>
          </div>
        </div>
        <div className="h-[8px] relative">
          <div className="mt-[3px] border-t border-[#2b7360] border-b border-b-[#a6ebdc]" />
          <div className={clsx(GREEN_UP, 'absolute right-[10px] top-[-2px] w-[10px] h-[10px]')} />
        </div>
        <div className={clsx(GREEN_DOWN, 'mx-[3px] h-[165px] mt-[1px]')}>
          <div className="w-full h-full border border-black flex justify-center pt-[17px] pr-[2px]"><BoardMap /></div>
        </div>
        <div className="h-[44px] mb-[2px] flex items-center pl-[4px]">
          <DotButton label="DEL" dot="bg-[#f11]" tall />
          <div className="w-[4px]" />
          <DotButton label="REF" dot="bg-[#1e1]" tall />
          <div className={clsx(MONO, 'ml-[2px] mr-[2px] w-[307px] h-[42px] border border-black bg-[#9bdada] flex items-center pl-[3px] font-bold')}>79 measurements for 3 layers</div>
          <SwapButton />
          <div className="w-[4px]" />
          <SwapButton back />
        </div>
        <div className="flex-1 bg-[#9bdada] border-t border-black p-[1px]">
          <div className={clsx(RAISED, MONO, 'h-[25px] flex items-center justify-center font-bold')}>Close</div>
        </div>
      </div>
    </div>
  )
}

/* ---------- taskbar ---------- */

function TaskIcon({ kind }: { kind: string }) {
  switch (kind) {
    case 'x':
      return <XIcon className="w-[31px] h-[29px]" />
    case 'floppy':
      return (
        <svg viewBox="0 0 32 32" className="w-[32px] h-[31px]">
          <path d="M1 1h27l3 3v27H1z" fill="#1c2ec4" stroke="#000a60" />
          <rect x="8" y="1" width="15" height="11" fill="#c4c8d4" /><rect x="16" y="3" width="4" height="8" fill="#1c2ec4" />
          <rect x="4" y="16" width="24" height="15" fill="#fff" />
          <path d="M6 19h20M6 22h20M6 25h8" stroke="#d02020" />
          <text x="15" y="30" fontSize="8" fontFamily="Liberation Sans" fontWeight="bold">64</text>
        </svg>
      )
    case 'shell':
      return (
        <svg viewBox="0 0 32 32" className="w-[32px] h-[31px]">
          <path d="M16 29L3 22C0 15 3 8 9 5c5-4 13-3 17 2 5 5 5 11 2 16z" fill="#f6c04c" stroke="#b8741c" />
          <path d="M16 28L5 12M16 28L10 5M16 28L17 3M16 28L24 6" stroke="#fff0b8" strokeWidth="1.500" />
          <path d="M22 11l3 7 6 1-5 4 2 7-6-4-6 4 2-7-5-4 6-1z" fill="#f0821c" stroke="#b0500c" />
        </svg>
      )
    case 'calc':
      return (
        <svg viewBox="0 0 24 32" className="w-[24px] h-[31px] mx-1">
          <rect x=".5" y=".5" width="23" height="31" rx="2" fill="#cfe3f4" stroke="#6c94bc" />
          <rect x="3" y="3" width="18" height="10" fill="#fff" stroke="#e09030" /><text x="14" y="12" fontSize="9" fontFamily="Liberation Sans">0</text>
          {[17, 21, 25].map(y => <path key={y} d={`M3 ${y}h3M8 ${y}h3M13 ${y}h3M18 ${y}h3M3 ${y + 2}h3M8 ${y + 2}h3M13 ${y + 2}h3M18 ${y + 2}h3`} stroke="#4c78a8" />)}
          <rect x="18" y="24" width="3" height="6" fill="#f09030" />
        </svg>
      )
    case 'ding':
      return (
        <svg viewBox="0 0 32 32" className="w-[32px] h-[32px]">
          <circle cx="16" cy="16" r="16" fill="#2f96f4" />
          <path d="M7 6l16 6c3 1 2 4 0 7h3l-8 9 1-6h-3l1-3c-5-1-6-4-6-5l4 0c-5-1-7-4-8-8z" fill="#fff" />
        </svg>
      )
    case 'note':
      return (
        <svg viewBox="0 0 24 30" className="w-[26px] h-[29px] mx-[3px]">
          <rect width="24" height="30" rx="2" fill="#f4fbff" />
          <path d="M3 5h18M3 9h18M3 13h18M3 17h18M3 21h18M3 25h18" stroke="#2490c4" strokeWidth="2" />
        </svg>
      )
    case 'fox':
      return (
        <svg viewBox="0 0 30 32" className="w-[29px] h-[30px]">
          <path d="M27 1L10 5C4 8 1 14 1 21c0 6 3 10 8 10h10c5 0 8-4 8-11l1-6-14 2-2 5 8-1c0 4-1 6-4 6h-4c-4 0-5-3-4-8 1-6 4-9 8-10l9-3z" fill="#d42a1c" stroke="#a01008" />
        </svg>
      )
    case 'eds':
    case 'eds2':
      return (
        <svg viewBox="0 0 30 34" className={clsx('w-[32px] h-[32px]', kind === 'eds2' && 'opacity-80')}>
          <path d="M14 5h7c10 2 11 18-1 19l-4 1v-7l4-2c3-1 2-4 0-4h-6z" fill="#129a3c" />
          <path d="M7 3h14l-1 5h-7l-1 6h6l-1 5h-6l-3 12H3z" fill={kind === 'eds' ? '#e8f0e8' : '#4a9a70'} stroke="#0a9038" strokeWidth="2" />
        </svg>
      )
    case 'gen':
      return (
        <svg viewBox="0 0 32 32" className="w-[32px] h-[30px]">
          <ellipse cx="17" cy="20" rx="14" ry="10" fill="#1c2c50" />
          <ellipse cx="18" cy="18" rx="12" ry="9" fill="#18a0a0" stroke="#b8dcdc" />
          <ellipse cx="18" cy="17" rx="7" ry="5.500" fill="#0c7c84" stroke="#40e0d8" />
          <ellipse cx="18" cy="17" rx="4" ry="3" fill="#d8e830" stroke="#046" strokeWidth="1.500" />
          <path d="M1 2h7l6 5-3 2-8-3z" fill="#20c8c8" stroke="#066" />
          <path d="M6 23l4 4M24 25l5-4" stroke="#e07050" strokeWidth="2" />
        </svg>
      )
    default: {
      const word = kind === 'word'
      return (
        <svg viewBox="0 0 30 34" className="w-[30px] h-[32px]">
          <path d="M6 2h17l6 6v25H6z" fill="#eef4fc" stroke="#8ca4c8" />
          <path d="M23 2v6h6z" fill="#b8cce4" />
          {word ? (
            <path d="M18 13h8M18 16h8M9 21h17M9 24h17M9 27h17M9 30h12" stroke="#5878b4" />
          ) : (
            <path d="M10 13h16v17H10zM10 17h16M10 21h16M10 25h16M15 13v17M20 13v17" stroke="#8cb0a0" fill="none" />
          )}
          <rect x="1" y="4" width="14" height="14" rx="2" fill={word ? '#f0f4ff' : '#f0fff0'} stroke={word ? '#3c5cac' : '#2c8c3c'} strokeWidth="1.500" />
          <path d={word ? 'M4 7l2 8 2-6 2 6 2-8' : 'M4 7l8 8M12 7l-8 8'} stroke={word ? '#2444a4' : '#14782c'} strokeWidth="2.200" fill="none" />
        </svg>
      )
    }
  }
}

const TASKS = [
  { icon: 'floppy', text: 'Admin...', w: 'w-[95px] mr-[3px]', tone: 'from-[#5c88a8] to-[#2e5f8c]' },
  { icon: 'shell', text: '兴森快...', w: 'w-[95px] mr-[3px]', tone: 'from-[#7f93ab] to-[#92a5bd]' },
  { icon: 'calc', text: '计算器', w: 'w-[95px] mr-[3px]', tone: 'from-[#a7b4c8] to-[#8499b4]' },
  { icon: 'ding', text: '钉钉', w: 'w-[95px] mr-[3px]', tone: 'from-[#a7b4c8] to-[#8499b4]' },
  { icon: 'note', text: '制作规...', w: 'w-[95px] mr-[3px]', tone: 'from-[#a7b4c8] to-[#8499b4]' },
  { icon: 'fox', text: 'Foxmail', w: 'w-[95px] mr-[3px]', tone: 'from-[#a7b4c8] to-[#8499b4]' },
  { icon: 'eds', text: 'EDS工...', w: 'w-[95px] border-r-0', tone: 'from-[#8498b0] to-[#54799c]' },
  { icon: 'eds2', text: '', w: 'w-[96px] mr-[3px]', tone: 'from-[#5c7c9c] to-[#2c6498]' },
  { icon: 'gen', text: 'Genesis', w: 'w-[95px] mr-[3px]', tone: 'from-[#6c84a4] to-[#2c6498]' },
  { icon: 'x', text: 'Engin...', w: 'w-[96px]', tone: 'from-[#6c84a4] to-[#2a6098]' },
  { icon: 'x', text: 'Progr...', w: 'w-[96px]', tone: 'from-[#6c84a4] to-[#2a6098]' },
  { icon: 'x', text: 'Graph...', w: 'w-[96px]', tone: 'from-[#b8c4d4] to-[#7f9cbc]' },
  { icon: 'x', text: 'Dialo...', w: 'w-[96px]', tone: 'from-[#6c84a4] to-[#2a6098]' },
  { icon: 'x', text: '2g1ej...', w: 'w-[95px] mr-[3px]', tone: 'from-[#6c84a4] to-[#235588]' },
  { icon: 'gen', text: 'CAM_...', w: 'w-[94px] mr-[3px]', tone: 'from-[#6c7c98] to-[#1c4c84]' },
  { icon: 'word', text: '20200...', w: 'w-[94px] mr-[3px]', tone: 'from-[#5c7090] to-[#1c4c84]' },
  { icon: 'excel', text: '2G1EJ...', w: 'w-[95px]', tone: 'from-[#6c7c98] to-[#1c4c84]' },
  { icon: 'excel', text: '2G1EJ...', w: 'w-[94px]', tone: 'from-[#5c7090] to-[#1c4c84]' },
]

function Taskbar() {
  return (
    <div className="relative z-20 h-[40px] bg-gradient-to-r from-[#1c4f7c] via-[#1f5488] to-[#123563] border-t border-[#0a1420] flex">
      <div className="w-[60px] shrink-0 flex items-center justify-center pr-[5px]">
        <svg viewBox="0 0 38 38" className="w-[37px] h-[37px]">
          <defs>
            <radialGradient id="orb" cx=".5" cy=".9" r=".9">
              <stop offset="0" stopColor="#6fd4ff" />
              <stop offset=".5" stopColor="#1c62a0" />
              <stop offset="1" stopColor="#a4bccc" />
            </radialGradient>
          </defs>
          <circle cx="19" cy="19" r="18" fill="url(#orb)" stroke="#0c2c4c" />
          <path d="M10 11c3-2 5-2 8 0l-2 8c-3-2-5-2-8 0z" fill="#f0642c" />
          <path d="M20 12c3 2 5 2 8 0l-2 8c-3 2-5 2-8 0z" fill="#9ccc3c" />
          <path d="M8 21c3-2 5-2 8 0l-2 7c-3-2-5-2-8 0z" fill="#58b4ec" />
          <path d="M17 22c3 2 5 2 8 0l-2 7c-3 2-5 2-8 0z" fill="#fcd03c" />
        </svg>
      </div>
      {TASKS.map((t, i) => (
        <div key={i} className={clsx('shrink-0 h-full border border-[#a4b8cc]/70 rounded-[2px] bg-gradient-to-b flex items-center gap-[4px] pl-[5px] overflow-hidden', t.w, t.tone)}>
          <div className="w-[32px] shrink-0 flex justify-center"><TaskIcon kind={t.icon} /></div>
          <span className={clsx(UI, 'text-[12.5px] text-white')}>{t.text}</span>
        </div>
      ))}
      <div className="flex-1 flex items-center">
        <svg viewBox="0 0 8 5" className="w-2 h-[5px] ml-[11px] mr-[11px]"><path d="M4 0l4 5H0z" fill="#fff" /></svg>
        <div className={clsx(UI, 'text-[12.300px] text-white text-center leading-[18px] w-[66px] -mt-[3px]')}>15:09{'\n'}2021/4/21</div>
      </div>
      <div className="w-[14px] border border-[#6c8cb0] bg-gradient-to-b from-[#5c7898] to-[#123563]" />
    </div>
  )
}

function LanguageBar() {
  return (
    <div className="absolute left-[1841px] top-[856px] w-[79px] h-[25px] border-t border-[#999] bg-gradient-to-b from-[#666] to-[#111] flex items-center pb-[2px] pl-[5px]">
      <span className="w-2 h-4 border-x-2 border-dotted border-[#333]" />
      <span className="font-['Liberation_Serif',serif] text-white text-[11px] leading-none font-bold tracking-[-1px] w-[14px] ml-[7px]">EN</span>
      <span className={clsx(UI, 'ml-[7px] w-[15px] h-[15px] rounded-full bg-[#1c30b0] border border-[#9ab] text-white text-[11px] font-bold flex items-center justify-center')}>?</span>
      <span className="ml-[11px] flex flex-col items-center gap-[7px]">
        <i className="w-[6px] h-[2px] bg-white" />
        <svg viewBox="0 0 6 3" className="w-[6px] h-[3px]"><path d="M0 0h6L3 3z" fill="#fff" /></svg>
      </span>
    </div>
  )
}

export default function App() {
  return (
    <div className="relative w-[1920px] h-[1080px] overflow-hidden text-black">
      <MainWindow />
      <Taskbar />
      <ChecklistEditor />
      <MeasurePopup />
      <Histogram />
      <ResultsViewer />
      <LanguageBar />
    </div>
  )
}
